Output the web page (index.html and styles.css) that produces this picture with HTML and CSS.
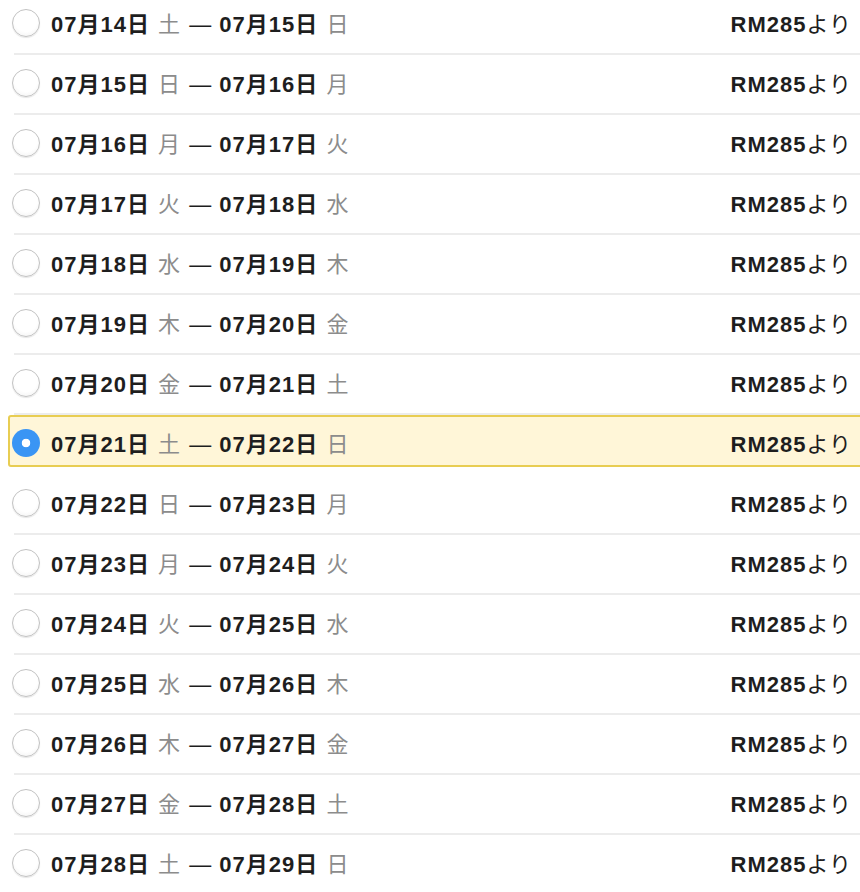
FILE: index.html
```html
<!DOCTYPE html>
<html lang="ja">

<head>
    <meta charset="UTF-8">
    <meta name="viewport" content="width=device-width, initial-scale=1.0">
    <title>日程を選択</title>
    <link rel="stylesheet" href="styles.css">
</head>

<body>
    <form class="dates">
        <label class="row">
            <span class="radio"></span>
            <span class="range"><b>07月14日</b> <i>土</i> — <b>07月15日</b> <i>日</i></span>
            <span class="price"><b>RM285</b>より</span>
        </label>
        <label class="row">
            <span class="radio"></span>
            <span class="range"><b>07月15日</b> <i>日</i> — <b>07月16日</b> <i>月</i></span>
            <span class="price"><b>RM285</b>より</span>
        </label>
        <label class="row">
            <span class="radio"></span>
            <span class="range"><b>07月16日</b> <i>月</i> — <b>07月17日</b> <i>火</i></span>
            <span class="price"><b>RM285</b>より</span>
        </label>
        <label class="row">
            <span class="radio"></span>
            <span class="range"><b>07月17日</b> <i>火</i> — <b>07月18日</b> <i>水</i></span>
            <span class="price"><b>RM285</b>より</span>
        </label>
        <label class="row">
            <span class="radio"></span>
            <span class="range"><b>07月18日</b> <i>水</i> — <b>07月19日</b> <i>木</i></span>
            <span class="price"><b>RM285</b>より</span>
        </label>
        <label class="row">
            <span class="radio"></span>
            <span class="range"><b>07月19日</b> <i>木</i> — <b>07月20日</b> <i>金</i></span>
            <span class="price"><b>RM285</b>より</span>
        </label>
        <label class="row">
            <span class="radio"></span>
            <span class="range"><b>07月20日</b> <i>金</i> — <b>07月21日</b> <i>土</i></span>
            <span class="price"><b>RM285</b>より</span>
        </label>
        <label class="row selected">
            <span class="radio"></span>
            <span class="range"><b>07月21日</b> <i>土</i> — <b>07月22日</b> <i>日</i></span>
            <span class="price"><b>RM285</b>より</span>
        </label>
        <label class="row">
            <span class="radio"></span>
            <span class="range"><b>07月22日</b> <i>日</i> — <b>07月23日</b> <i>月</i></span>
            <span class="price"><b>RM285</b>より</span>
        </label>
        <label class="row">
            <span class="radio"></span>
            <span class="range"><b>07月23日</b> <i>月</i> — <b>07月24日</b> <i>火</i></span>
            <span class="price"><b>RM285</b>より</span>
        </label>
        <label class="row">
            <span class="radio"></span>
            <span class="range"><b>07月24日</b> <i>火</i> — <b>07月25日</b> <i>水</i></span>
            <span class="price"><b>RM285</b>より</span>
        </label>
        <label class="row">
            <span class="radio"></span>
            <span class="range"><b>07月25日</b> <i>水</i> — <b>07月26日</b> <i>木</i></span>
            <span class="price"><b>RM285</b>より</span>
        </label>
        <label class="row">
            <span class="radio"></span>
            <span class="range"><b>07月26日</b> <i>木</i> — <b>07月27日</b> <i>金</i></span>
            <span class="price"><b>RM285</b>より</span>
        </label>
        <label class="row">
            <span class="radio"></span>
            <span class="range"><b>07月27日</b> <i>金</i> — <b>07月28日</b> <i>土</i></span>
            <span class="price"><b>RM285</b>より</span>
        </label>
        <label class="row">
            <span class="radio"></span>
            <span class="range"><b>07月28日</b> <i>土</i> — <b>07月29日</b> <i>日</i></span>
            <span class="price"><b>RM285</b>より</span>
        </label>
    </form>
</body>

</html>
```

FILE: styles.css
```css
* {
    box-sizing: border-box;
    padding: 0;
    margin: 0;
}

html,
body {
    width: 100%;
    height: 100%;
    overflow: hidden;
}

body {
    background: #fff;
    color: #1e1e1e;
    font-family: "Liberation Sans", "Noto Sans CJK JP", sans-serif;
    font-size: 22px;
}

.dates {
    display: flex;
    flex-direction: column;
    margin: -5px -20px 0 14px;
}

.row {
    display: flex;
    align-items: center;
    height: 60px;
    padding: 0 28px 2px 0;
    border-bottom: 2px solid #ececec;
    cursor: pointer;
}

.row.selected {
    height: 52px;
    margin: 0 0 8px -6px;
    padding: 4px 26px 0 4px;
    background-color: #fff6d8;
    border: 2px solid #e8cd52;
    border-radius: 3px;
}

.radio {
    flex: none;
    width: 28px;
    height: 28px;
    margin: 0 11px 0 -2px;
    border-radius: 50%;
    border: 1px solid #c2c2c2;
    background: radial-gradient(circle at 50% 40%, #fff 55%, #eeeeee 100%);
    box-shadow: 0 1px 1px rgba(0, 0, 0, 0.1);
}

.selected .radio {
    border: none;
    background: radial-gradient(circle, #fff 0 4px, #3a95f4 4.6px);
    box-shadow: none;
}

.range {
    flex: 1;
    margin-bottom: 3px;
    white-space: nowrap;
    letter-spacing: 1px;
}

.range b,
.price b {
    font-weight: 700;
}

.range i {
    font-style: normal;
    color: #8c8c8c;
    margin: 0 1px;
}

.price {
    margin-bottom: 3px;
    white-space: nowrap;
    letter-spacing: 1px;
}
```
